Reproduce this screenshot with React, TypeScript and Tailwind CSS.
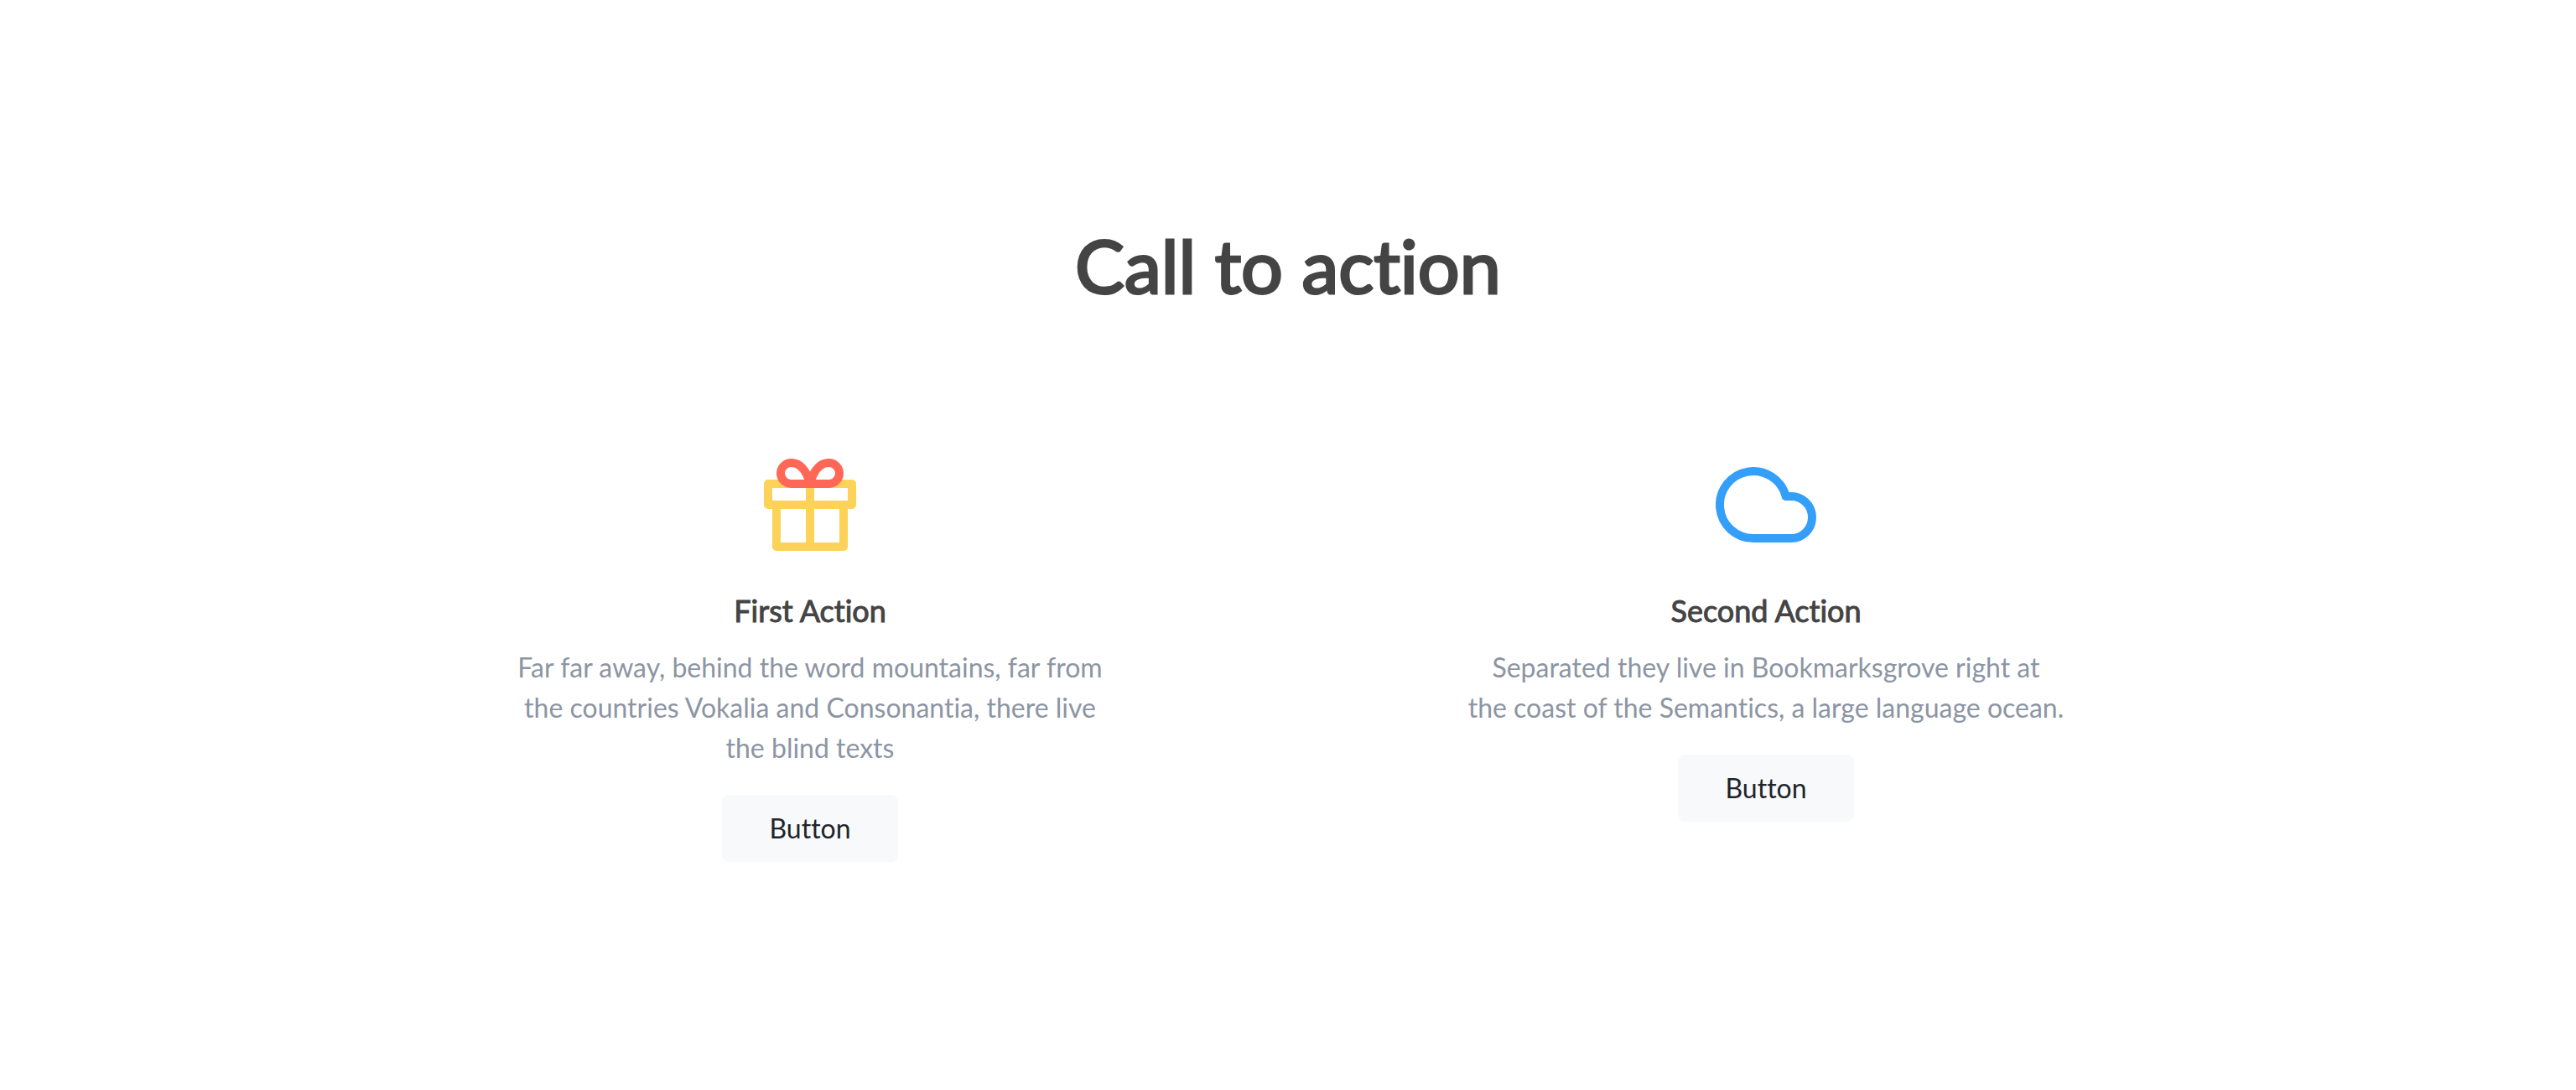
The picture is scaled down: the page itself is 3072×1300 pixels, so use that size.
import type { ReactNode } from "react";

function GiftIcon() {
  return (
    <svg
      className="size-30"
      viewBox="0 0 24 24"
      fill="none"
      strokeWidth="2"
      strokeLinecap="round"
      strokeLinejoin="round"
      aria-hidden="true"
    >
      <g stroke="#fcd259">
        <polyline points="20 12 20 22 4 22 4 12" />
        <rect x="2" y="7" width="20" height="5" />
        <line x1="12" y1="22" x2="12" y2="7" />
      </g>
      <g stroke="#ff6757">
        <path d="M12 7H7.5a2.5 2.5 0 0 1 0-5C11 2 12 7 12 7z" />
        <path d="M12 7h4.500a2.500 2.500 0 0 0 0-5C13 2 12 7 12 7z" />
      </g>
    </svg>
  );
}

function CloudIcon() {
  return (
    <svg
      className="size-30"
      viewBox="0 0 24 24"
      fill="none"
      stroke="#349ff9"
      strokeWidth="2"
      strokeLinecap="round"
      strokeLinejoin="round"
      aria-hidden="true"
    >
      <path d="M18 10h-1.260A8 8 0 1 0 9 20h9a5 5 0 0 0 0-10z" />
    </svg>
  );
}

type ActionProps = { icon: ReactNode; title: string; text: string };

function Action({ icon, title, text }: ActionProps) {
  return (
    <article className="flex flex-col items-center px-8 text-center">
      {icon}
      <h2 className="mt-[46px] text-[36px] leading-[40px] font-normal text-[#444444] [-webkit-text-stroke:1px_#444444]">
        {title}
      </h2>
      <p className="mt-6 mb-8 max-w-[720px] text-[32px] leading-[48px] text-[#8c95a4]">{text}</p>
      <button
        type="button"
        className="cursor-pointer rounded-lg bg-[#f8f9fb] px-14 py-4 text-[32px] leading-[48px] text-[#212529]"
      >
        Button
      </button>
    </article>
  );
}

export default function App() {
  return (
    <main className="flex min-h-screen flex-col items-center bg-white px-8 py-64 font-['Lato',sans-serif] [font-variant-ligatures:none]">
      <h1 className="text-center text-[88px] leading-[120px] font-normal text-[#444444] [-webkit-text-stroke:3px_#444444]">
        Call to action
      </h1>
      <section className="mt-[166px] grid w-full max-w-[2280px] grid-cols-1 gap-y-16 md:grid-cols-2">
        <Action
          icon={<GiftIcon />}
          title="First Action"
          text="Far far away, behind the word mountains, far from the countries Vokalia and Consonantia, there live the blind texts"
        />
        <Action
          icon={<CloudIcon />}
          title="Second Action"
          text={"Separated they live in Bookmarksgrove right at the\u00a0coast of the Semantics, a large language ocean."}
        />
      </section>
    </main>
  );
}
